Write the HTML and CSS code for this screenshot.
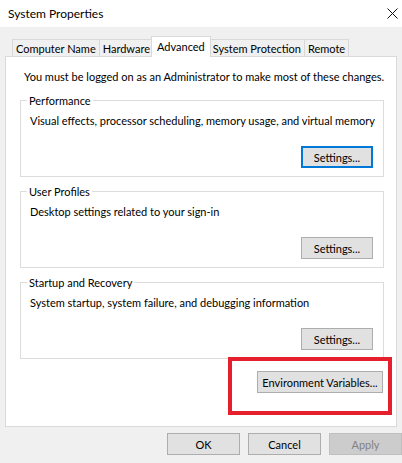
FILE: index.html
```html
<!DOCTYPE html>
<html lang="en">
<head>
  <meta charset="UTF-8" />
  <title>System Properties</title>
  <link rel="stylesheet" href="styles.css">
</head>
<body>
  <div class="titlebar">
    <span class="title">System Properties</span>
    <svg class="close" width="11" height="11" viewBox="0 0 11 11">
      <path d="M0.5 0.5L10.5 10.5M10.5 0.5L0.5 10.5" stroke="#111" stroke-width="1" fill="none"/>
    </svg>
  </div>

  <div class="tabs">
    <div class="tab">Computer Name</div>
    <div class="tab">Hardware</div>
    <div class="tab active">Advanced</div>
    <div class="tab">System Protection</div>
    <div class="tab">Remote</div>
  </div>

  <div class="panel">
    <p class="note">You must be logged on as an Administrator to make most of these changes.</p>

    <fieldset class="group">
      <legend>Performance</legend>
      <p>Visual effects, processor scheduling, memory usage, and virtual memory</p>
      <div class="row"><button class="btn focus">Settings...</button></div>
    </fieldset>

    <fieldset class="group">
      <legend>User Profiles</legend>
      <p>Desktop settings related to your sign-in</p>
      <div class="row"><button class="btn">Settings...</button></div>
    </fieldset>

    <fieldset class="group">
      <legend>Startup and Recovery</legend>
      <p>System startup, system failure, and debugging information</p>
      <div class="row"><button class="btn">Settings...</button></div>
    </fieldset>

    <div class="row env">
      <button class="btn wide">Environment Variables...</button>
    </div>

    <div class="highlight"></div>
  </div>

  <div class="footer">
    <button class="btn">OK</button>
    <button class="btn">Cancel</button>
    <button class="btn" disabled>Apply</button>
  </div>
</body>
</html>
```

FILE: styles.css
```css
body {
  margin: 0;
  width: 402px;
  height: 463px;
  overflow: hidden;
  background: #f0f0f0;
  font-family: Lato, "Liberation Sans", sans-serif;
  font-size: 11px;
  color: #000;
  white-space: nowrap;
}

.titlebar {
  height: 27px;
  background: #fff;
  display: flex;
  align-items: center;
  justify-content: space-between;
  padding: 0 4px 0 8px;
}
.title {
  font-size: 12px;
}
.close {
  display: block;
}

.tabs {
  display: flex;
  align-items: flex-end;
  height: 29px;
  padding-left: 12px;
  position: relative;
  z-index: 1;
}
.tab {
  height: 17px;
  line-height: 17px;
  padding: 0 3px;
  border: 1px solid #d9d9d9;
  border-bottom: none;
  margin-right: -1px;
  box-sizing: border-box;
  background: #f0f0f0;
}
.tab.active {
  height: 21px;
  line-height: 19px;
  margin: 0 -2px -1px -2px;
  padding: 0 5px;
  background: #fff;
  position: relative;
}

.panel {
  position: relative;
  margin: 0 5px 0 5px;
  height: 369px;
  background: #fff;
  border: 1px solid #d9d9d9;
  padding: 0 12px 0 14px;
}

.note {
  margin: 12px 0 0 4px;
  line-height: 15px;
}

.group {
  margin: 9px 0 0 0;
  padding: 5px 10px 8px 9px;
  border: 1px solid #dcdcdc;
  min-width: 0;
}
.group + .group {
  margin-top: 7px;
}
.group legend {
  padding: 0 2px;
  margin-left: -3px;
  line-height: 15px;
}
.group p {
  margin: 0;
  line-height: 15px;
}

.row {
  display: flex;
  justify-content: flex-end;
  margin-top: 18px;
}
.env {
  margin-top: 12px;
  padding-right: 1px;
}

.btn {
  width: 72px;
  height: 22px;
  padding: 0;
  box-sizing: border-box;
  background: #e1e1e1;
  border: 1px solid #adadad;
  font-family: inherit;
  font-size: 11px;
  color: #000;
}
.btn.focus {
  border: 2px solid #0078d7;
}
.btn.wide {
  width: 126px;
}
.btn:disabled {
  background: #cccccc;
  border-color: #bfbfbf;
  color: #838383;
}

.highlight {
  position: absolute;
  left: 222px;
  top: 300px;
  width: 156px;
  height: 50px;
  border: 4px solid #e5202c;
}

.footer {
  display: flex;
  justify-content: flex-end;
  gap: 8px;
  margin-top: 6px;
}
.footer .btn {
  width: 73px;
}
```
